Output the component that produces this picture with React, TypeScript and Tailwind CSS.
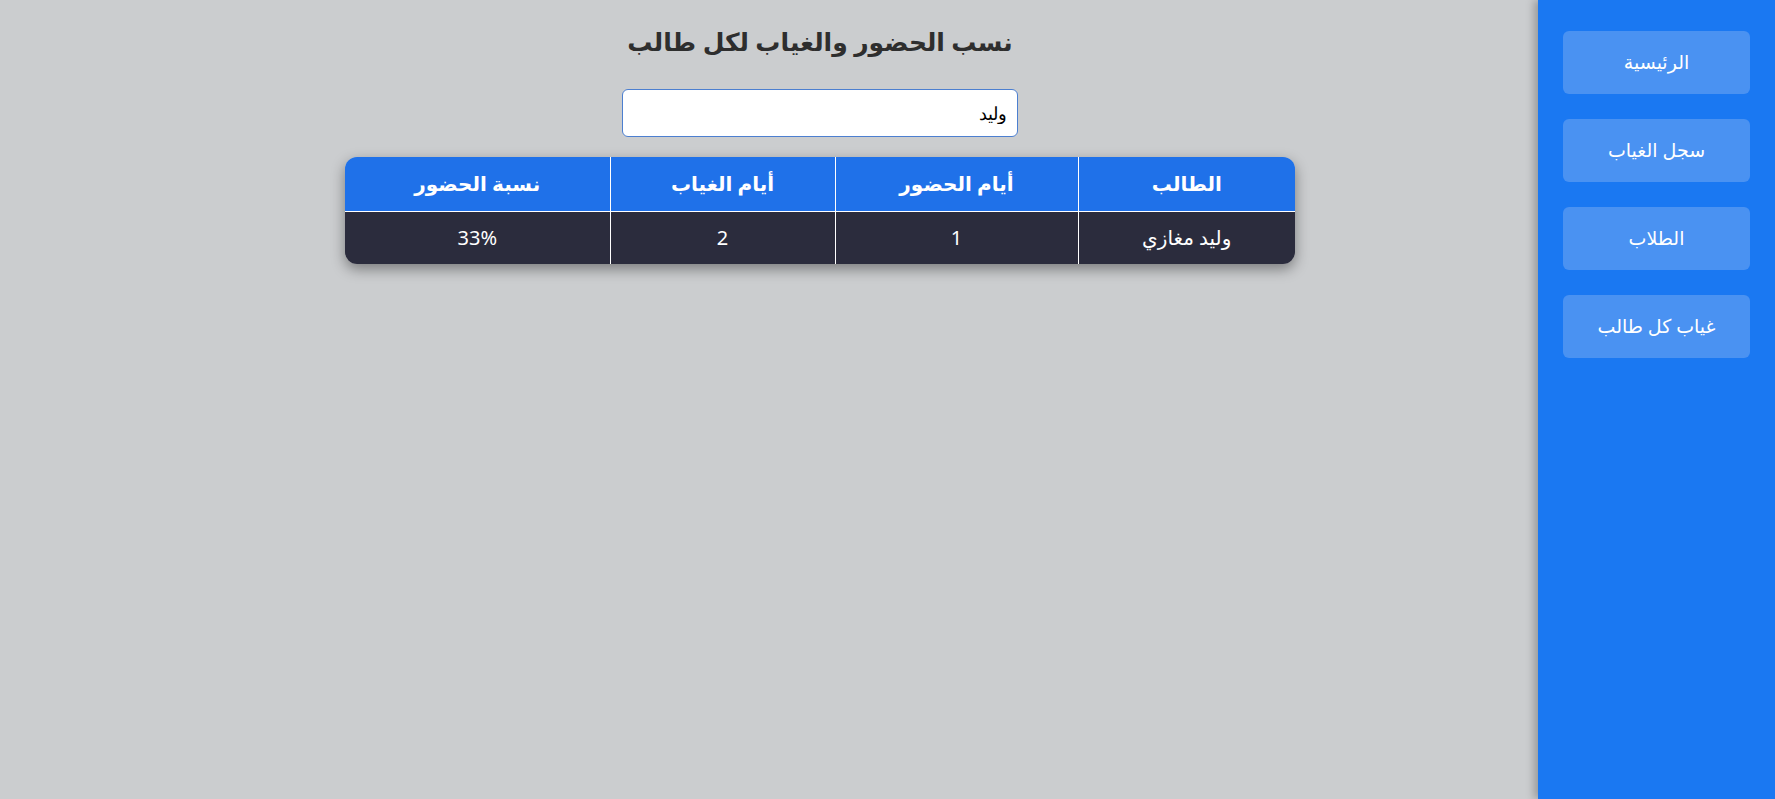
import { useState } from 'react';

interface Row {
  name: string;
  present: number;
  absent: number;
  rate: string;
}

const rows: Row[] = [{ name: 'وليد مغازي', present: 1, absent: 2, rate: '33%' }];

const links = ['الرئيسية', 'سجل الغياب', 'الطلاب', 'غياب كل طالب'];

function Sidebar() {
  return (
    <aside className="w-[237px] shrink-0 bg-[#1a78f2] shadow-[-4px_0_8px_rgba(0,0,0,0.25)] px-[25px] pt-[31px] flex flex-col gap-[25px] z-10">
      {links.map((l) => (
        <button
          key={l}
          className="h-[63px] w-full rounded-md bg-[#4a92f2] text-white text-[19px]"
        >
          {l}
        </button>
      ))}
    </aside>
  );
}

export default function App() {
  const [query, setQuery] = useState('وليد');
  const filtered = rows.filter((r) => r.name.includes(query));

  return (
    <div
      dir="rtl"
      className="flex flex-row min-h-[799px] bg-[#cbcdcf] font-['Noto_Sans','DejaVu_Sans',sans-serif]"
    >
      <Sidebar />
      <main className="flex-1 pl-[102px] flex flex-col items-center">
        <h2 className="mt-[23px] text-[25px] font-bold text-[#2e2e2e] leading-[36px]">
          نسب الحضور والغياب لكل طالب
        </h2>
        <input
          value={query}
          onChange={(e) => setQuery(e.target.value)}
          className="mt-[30px] w-[396px] h-[48px] rounded-md border border-[#4c7fd0] bg-white px-[10px] text-[18px] text-black outline-none font-['DejaVu_Serif','Liberation_Serif',serif]"
        />
        <div className="mt-[20px] w-[950px] rounded-xl overflow-hidden shadow-[0_5px_14px_rgba(0,0,0,0.4)]">
          <table className="w-full border-collapse text-white text-[20px]">
            <thead>
              <tr className="bg-[#1f71e9] h-[54px]">
                <th className="w-[217px] border-l border-b border-white font-bold">الطالب</th>
                <th className="w-[243px] border-l border-b border-white font-bold">أيام الحضور</th>
                <th className="w-[225px] border-l border-b border-white font-bold">أيام الغياب</th>
                <th className="border-b border-white font-bold">نسبة الحضور</th>
              </tr>
            </thead>
            <tbody>
              {filtered.map((r) => (
                <tr key={r.name} className="bg-[#2b2c3d] h-[53px]">
                  <td className="border-l border-white text-center">{r.name}</td>
                  <td className="border-l border-white text-center">{r.present}</td>
                  <td className="border-l border-white text-center">{r.absent}</td>
                  <td className="text-center">{r.rate}</td>
                </tr>
              ))}
            </tbody>
          </table>
        </div>
      </main>
    </div>
  );
}
